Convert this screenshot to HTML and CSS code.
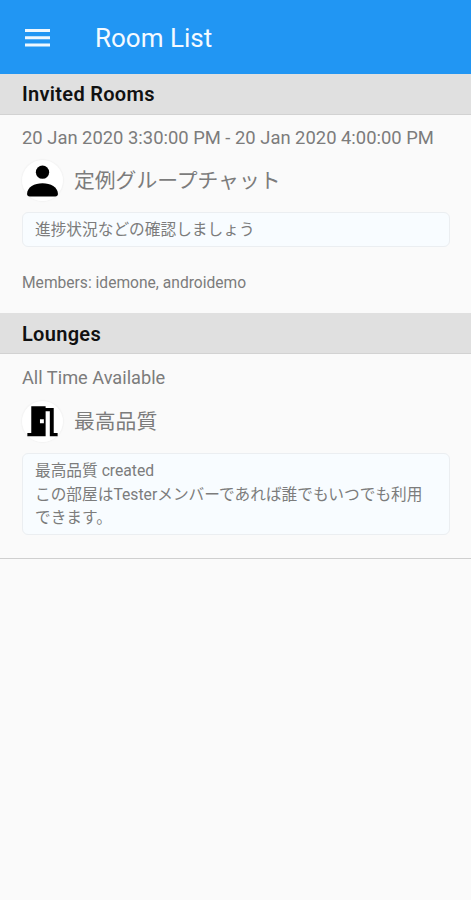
FILE: index.html
```html
<!DOCTYPE html>
<html lang="en">
<head>
  <meta charset="UTF-8" />
  <meta name="viewport" content="width=device-width, initial-scale=1.0"/>
  <title>Room List</title>
  <link rel="stylesheet" href="styles.css">
</head>
<body>

<header class="toolbar">
  <svg class="menu-icon" viewBox="0 0 26 18">
    <path d="M0 0h25v3H0zM0 7.2h25v3H0zM0 14.4h25v3H0z" fill="#eef7fe"/>
  </svg>
  <h1>Room List</h1>
</header>

<main>
  <h2>Invited Rooms</h2>
  <section class="room invited">
    <div class="time"><span>20 Jan 2020 3:30:00 PM - 20 Jan 2020 4:00:00 PM</span></div>
    <div class="room-title">
      <div class="avatar">
        <svg viewBox="0 0 42 42">
          <circle cx="21" cy="12.5" r="6.8"/>
          <path d="M8 37.5c-1.8 0-2.8-1-2.8-2.6 0-7 7.5-11 15.800-11s15.800 4 15.800 11c0 1.600-1 2.600-2.800 2.600z"/>
        </svg>
      </div>
      <span lang="ja">定例グループチャット</span>
    </div>
    <div class="description" lang="ja">進捗状況などの確認しましょう</div>
    <div class="members">Members: idemone, androidemo</div>
  </section>

  <h2 class="lounges-heading">Lounges</h2>
  <section class="room lounge">
    <div class="time"><span>All Time Available</span></div>
    <div class="room-title">
      <div class="avatar">
        <svg viewBox="0 0 42 42">
          <path d="M9.5 5.3h14.7v1.800h8.300v25.700h4v3.400h-8V10.500h-4.300v25.700H5.500v-3.400h4zM18.400 18.700v4h4v-4z" fill-rule="evenodd"/>
        </svg>
      </div>
      <span lang="ja">最高品質</span>
    </div>
    <div class="description" lang="ja">最高品質 created<br>この部屋はTesterメンバーであれば誰でもいつでも利用<br>できます。</div>
  </section>
</main>

</body>
</html>
```
FILE: styles.css
```css
* {
  box-sizing: border-box;
}

body {
  margin: 0;
  min-height: 100vh;
  background: #fafafa;
  color: #7c7c7c;
  font-family: Roboto, "Noto Sans CJK JP", sans-serif;
}

.toolbar {
  display: flex;
  align-items: center;
  height: 74px;
  padding: 2px 24px 0 25px;
  background: #2196f3;
  color: #f4faff;
}

.menu-icon {
  width: 26px;
  height: 18px;
  margin-right: 44px;
}

h1 {
  margin: 0;
  font-size: 26px;
  font-weight: 400;
  line-height: 34px;
}

h2 {
  height: 41px;
  margin: 0;
  padding: 0 22px;
  background: #e0e0e0;
  border-bottom: 1px solid #d2d2d2;
  color: #111;
  font-size: 20px;
  font-weight: 600;
  letter-spacing: 0.3px;
  line-height: 41px;
}

.lounges-heading {
  line-height: 43px;
}

.room {
  padding: 11px 21px 0 22px;
}

.invited {
  height: 198px;
}

.lounge {
  height: 205px;
  padding-top: 12px;
  border-bottom: 1px solid #cfcfcf;
}

.time {
  font-size: 18.4px;
  line-height: 24px;
  white-space: nowrap;
}

.lounge .time {
  font-size: 18.2px;
}

.room-title {
  display: flex;
  align-items: center;
  gap: 11px;
  height: 42px;
  margin-top: 9px;
  font-size: 20.8px;
  line-height: 30px;
}

.room-title span {
  padding-top: 2px;
}

.lounge .room-title {
  margin-top: 10px;
}

.avatar {
  width: 41px;
  height: 41px;
  border-radius: 50%;
  background: #fff;
  box-shadow: 0 0 1px 1px #f3f3f3;
}

.avatar svg {
  display: block;
  width: 41px;
  height: 41px;
}

.description {
  margin-top: 11px;
  padding: 5px 12px 4px;
  background: #f8fcff;
  border: 1px solid #ebeef1;
  border-radius: 6px;
  font-size: 15.7px;
  line-height: 23.5px;
  white-space: nowrap;
}

.members {
  margin-top: 24px;
  font-size: 15.6px;
  line-height: 24px;
}
```
